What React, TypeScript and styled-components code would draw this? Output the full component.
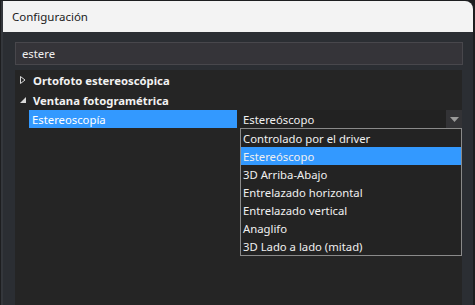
import React from "react";
import styled, { createGlobalStyle } from "styled-components";

const GlobalStyle = createGlobalStyle`
  html, body {
    margin: 0;
    padding: 0;
    background: #1d1e20;
    overflow: hidden;
  }
  * {
    box-sizing: border-box;
  }
`;

const Window = styled.div`
  display: flex;
  flex-direction: column;
  width: 472px;
  height: 304px;
  margin-top: 1px;
  margin-left: 1px;
  background: #2b2e33;
  border-left: 2px solid #34373c;
  border-radius: 0 8px 0 0;
  overflow: hidden;
  font-family: "Noto Sans", "Open Sans", sans-serif;
  font-size: 11.3px;
`;

const TitleBar = styled.div`
  display: flex;
  align-items: center;
  height: 31px;
  padding-left: 9px;
  background: #f3f3f3;
  color: #1b1b1b;
  font-size: 11.5px;
`;

const Body = styled.div`
  display: flex;
  flex-direction: column;
  flex: 1;
  padding: 10px 10px 0 12px;
  gap: 5px;
`;

const SearchBox = styled.div`
  display: flex;
  align-items: center;
  height: 23px;
  padding-left: 6px;
  background: #353439;
  border: 1px solid #48474c;
  color: #f0f0f0;
`;

const TreePanel = styled.div`
  position: relative;
  flex: 1;
  display: flex;
  flex-direction: column;
  margin-right: 1px;
  background: #252525;
`;

const CategoryRow = styled.div`
  display: flex;
  align-items: center;
  height: 20px;
  padding-left: 4px;
  gap: 6px;
  color: #f2f2f2;
  font-weight: bold;
`;

const Arrow = styled.svg`
  width: 8px;
  height: 8px;
  flex: none;
`;

const PropertyRow = styled.div`
  display: flex;
  height: 18px;
  padding-left: 14px;
  gap: 3px;
`;

const NameCell = styled.div`
  display: flex;
  align-items: center;
  width: 208px;
  padding-left: 3px;
  background: #3399ff;
  color: #ffffff;
`;

const ValueCell = styled.div`
  position: relative;
  display: flex;
  flex: 1;
  align-items: center;
  background: #222222;
  color: #f0f0f0;
`;

const ValueText = styled.span`
  flex: 1;
  padding-left: 3px;
`;

const DropButton = styled.div`
  display: flex;
  align-items: center;
  justify-content: center;
  width: 16px;
  height: 100%;
  background: #333336;
`;

const DropList = styled.ul`
  position: absolute;
  top: 18px;
  left: 0;
  right: 0;
  margin: 0;
  padding: 0;
  list-style: none;
  background: #232323;
  border: 1px solid #8a8a8a;
  z-index: 2;
`;

const DropItem = styled.li<{ $selected?: boolean }>`
  display: flex;
  align-items: center;
  height: 18px;
  padding-left: 2px;
  color: #f0f0f0;
  background: ${(p) => (p.$selected ? "#3399ff" : "transparent")};
`;

const options = [
  "Controlado por el driver",
  "Estereóscopo",
  "3D Arriba-Abajo",
  "Entrelazado horizontal",
  "Entrelazado vertical",
  "Anaglifo",
  "3D Lado a lado (mitad)",
];

export default function App() {
  const selected = "Estereóscopo";

  return (
    <>
      <GlobalStyle />
      <Window>
        <TitleBar>Configuración</TitleBar>
        <Body>
          <SearchBox>estere</SearchBox>
          <TreePanel>
            <CategoryRow>
              <Arrow viewBox="0 0 8 8">
                <path d="M1.5 0.5 L6 4 L1.5 7.5 Z" fill="none" stroke="#d8d8d8" strokeWidth="1" />
              </Arrow>
              Ortofoto estereoscópica
            </CategoryRow>
            <CategoryRow>
              <Arrow viewBox="0 0 8 8">
                <path d="M7 1 L7 7 L1 7 Z" fill="#d8d8d8" />
              </Arrow>
              Ventana fotogramétrica
            </CategoryRow>
            <PropertyRow>
              <NameCell>Estereoscopía</NameCell>
              <ValueCell>
                <ValueText>{selected}</ValueText>
                <DropButton>
                  <svg width="9" height="5" viewBox="0 0 9 5">
                    <path d="M0 0 H9 L4.5 5 Z" fill="#9a9a9a" />
                  </svg>
                </DropButton>
                <DropList>
                  {options.map((o) => (
                    <DropItem key={o} $selected={o === selected}>
                      {o}
                    </DropItem>
                  ))}
                </DropList>
              </ValueCell>
            </PropertyRow>
          </TreePanel>
        </Body>
      </Window>
    </>
  );
}
